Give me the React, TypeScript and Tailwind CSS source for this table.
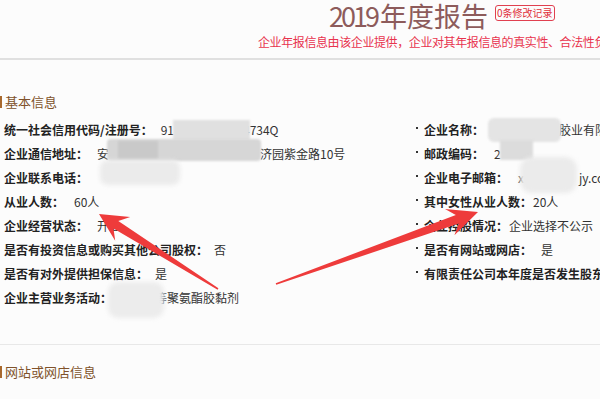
import type { ReactNode } from 'react'

interface Row {
  label: string
  value?: ReactNode
  gap: string
  rLabel?: string
  rValue?: ReactNode
  rGap?: string
}

const rows: Row[] = [
  {
    label: '统一社会信用代码/注册号：',
    value: <>91<span className="inline-block w-[69px]" />4734Q</>,
    gap: 'ml-[8px]',
    rLabel: '企业名称：',
    rValue: <><span className="inline-block w-[71px]" />胶业有限公司</>,
    rGap: 'ml-[4px]',
  },
  {
    label: '企业通信地址：',
    value: <>安<span className="inline-block w-[151px]" />济园紫金路10号</>,
    gap: 'ml-[9px]',
    rLabel: '邮政编码：',
    rValue: '2',
    rGap: 'ml-[10px]',
  },
  {
    label: '企业联系电话：',
    gap: 'ml-[9px]',
    rLabel: '企业电子邮箱：',
    rValue: <>x<span className="inline-block w-[55px]" />jy.com</>,
    rGap: 'ml-[10px]',
  },
  { label: '从业人数：', value: '60人', gap: 'ml-[10px]', rLabel: '其中女性从业人数：', rValue: '20人', rGap: 'ml-[1px]' },
  { label: '企业经营状态：', value: '开业', gap: 'ml-[9px]', rLabel: '企业控股情况：', rValue: '企业选择不公示', rGap: 'ml-[1px]' },
  { label: '是否有投资信息或购买其他公司股权：', value: '否', gap: 'ml-[6px]', rLabel: '是否有网站或网店：', rValue: '是', rGap: 'ml-[9px]' },
  { label: '是否有对外提供担保信息：', value: '是', gap: 'ml-[7px]', rLabel: '有限责任公司本年度是否发生股东股权转让：', rValue: '否', rGap: 'ml-[9px]' },
  {
    label: '企业主营业务活动：',
    value: <><span className="inline-block w-[31px]" />等聚氨酯胶黏剂</>,
    gap: 'ml-[12px]',
  },
]

// 截图标注用的红色箭头
function arrowPoints(tx: number, ty: number, px: number, py: number, L: number, W: number, w1: number, w0: number) {
  const dx = px - tx
  const dy = py - ty
  const len = Math.hypot(dx, dy)
  const ux = dx / len
  const uy = dy / len
  const nx = -uy
  const ny = ux
  const bx = px - ux * L
  const by = py - uy * L
  const sx = px - ux * (L - 8)
  const sy = py - uy * (L - 8)
  const pts = [
    [px, py],
    [bx + nx * W, by + ny * W],
    [sx + nx * w1, sy + ny * w1],
    [tx + nx * w0, ty + ny * w0],
    [tx - nx * w0, ty - ny * w0],
    [sx - nx * w1, sy - ny * w1],
    [bx - nx * W, by - ny * W],
  ]
  return pts.map(p => p.map(v => v.toFixed(1)).join(',')).join(' ')
}

function SectionTitle({ children }: { children: ReactNode }) {
  return (
    <div className="flex items-center h-[20px] text-[13px] text-[#80522a]">
      <span className="w-[2px] h-[12px] bg-[#a8692e] mr-[3px]" />
      {children}
    </div>
  )
}

export default function App() {
  return (
    <div className="relative w-[600px] h-[399px] overflow-hidden bg-[#fcfcfc] font-['Noto_Sans_CJK_SC','Microsoft_YaHei',sans-serif]">
      {/* 标题 */}
      <div className="flex items-start pl-[329px]">
        <h1 className="text-[27px] leading-[32px] text-[#8d5b5b] font-normal whitespace-nowrap">
          <span className="tracking-[-3px] mr-[3px]">2019</span>年度报告
        </h1>
        <span className="mt-[5px] ml-[7px] px-[1px] h-[16px] leading-[14px] text-[10px] text-[#e0303a] border border-[#e04050] rounded-[3px] whitespace-nowrap">
          0条修改记录
        </span>
      </div>
      <p className="mt-[3px] pl-[258px] text-[12px] leading-[14px] tracking-[-0.4px] text-[#e8344e] whitespace-nowrap">
        企业年报信息由该企业提供，企业对其年报信息的真实性、合法性负责
      </p>
      <div className="mt-[9px] h-[2px] bg-[#e0e0e0]" />

      <div className="mt-[32px]">
        <SectionTitle>基本信息</SectionTitle>
      </div>

      <div className="mt-[6px] pl-[4px] text-[12px] leading-[24px]">
        {rows.map((row, i) => (
          <div key={i} className="flex h-[24px] whitespace-nowrap">
            <div className="w-[412px] shrink-0 flex">
              <span className="font-bold text-[#222]">{row.label}</span>
              {row.value && <span className={`${row.gap} text-[#333]`}>{row.value}</span>}
            </div>
            {row.rLabel && (
              <div className="flex items-center">
                <span className="w-[2px] h-[2px] bg-[#333] mr-[6px] -mt-[5px]" />
                <span className="font-bold text-[#222]">{row.rLabel}</span>
                <span className={`${row.rGap} text-[#333]`}>{row.rValue}</span>
              </div>
            )}
          </div>
        ))}
      </div>

      <div className="mt-[34px] h-[1px] bg-[#e8e8e8]" />
      <div className="mt-[17px]">
        <SectionTitle>网站或网店信息</SectionTitle>
      </div>

      {/* 打码区域 */}
      <div className="absolute left-[173px] top-[120px] w-[77px] h-[20px] bg-[#e0e0e0] blur-[1px]" />
      <div className="absolute left-[107px] top-[139px] w-[154px] h-[22px] bg-[#d6d6d6] blur-[1px] rounded-[4px]" />
      <div className="absolute left-[118px] top-[141px] w-[40px] h-[18px] bg-[#c9c9c9] blur-[1px]" />
      <div className="absolute left-[100px] top-[160px] w-[80px] h-[25px] bg-[#ebebeb] blur-[2px] rounded-[8px]" />
      <div className="absolute left-[488px] top-[118px] w-[73px] h-[24px] bg-[#e4e4e4] blur-[1px] rounded-[6px]" />
      <div className="absolute left-[500px] top-[140px] w-[33px] h-[20px] bg-[#dcdcdc] blur-[1px]" />
      <div className="absolute left-[520px] top-[157px] w-[57px] h-[36px] bg-[#ebebeb] blur-[2px] rounded-[12px]" />
      <div className="absolute left-[108px] top-[282px] w-[56px] h-[36px] bg-[#ececec] blur-[2px] rounded-[10px]" />

      <svg className="absolute left-0 top-0 pointer-events-none" width="600" height="399" viewBox="0 0 600 399">
        <polygon points={arrowPoints(218, 289, 99, 214, 28, 14, 4.5, 0.8)} fill="#ee3b3b" />
        <polygon points={arrowPoints(276, 284, 478, 212, 30, 14, 4.5, 0.8)} fill="#ee3b3b" />
      </svg>
    </div>
  )
}
